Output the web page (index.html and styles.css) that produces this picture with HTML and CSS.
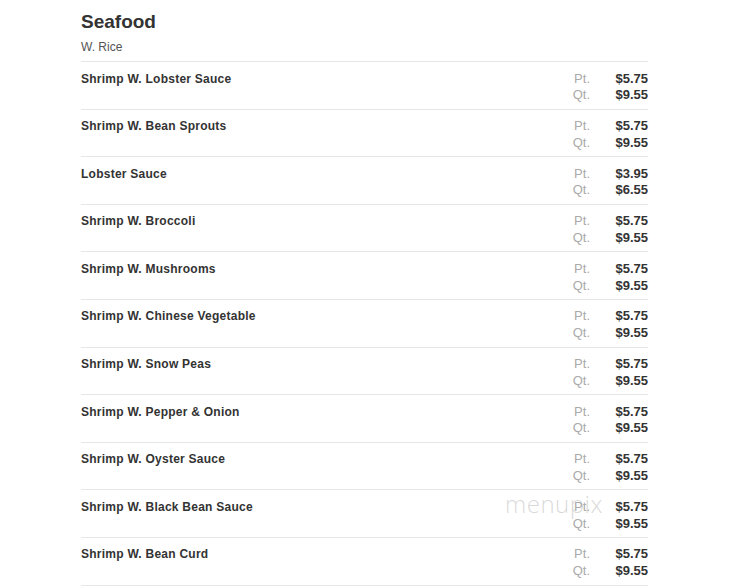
FILE: index.html
```html
<!DOCTYPE html>
<html>
<head>
<meta charset="utf-8">
<link rel="stylesheet" href="styles.css">
</head>
<body>
<div class="menu">
  <div class="header">
    <h1 class="title">Seafood</h1>
    <div class="subtitle">W. Rice</div>
  </div>
  <div class="item"><div class="name">Shrimp W. Lobster Sauce</div><div class="prices"><span class="size">Pt.</span><span class="price">$5.75</span><span class="size">Qt.</span><span class="price">$9.55</span></div></div>
  <div class="item"><div class="name">Shrimp W. Bean Sprouts</div><div class="prices"><span class="size">Pt.</span><span class="price">$5.75</span><span class="size">Qt.</span><span class="price">$9.55</span></div></div>
  <div class="item"><div class="name">Lobster Sauce</div><div class="prices"><span class="size">Pt.</span><span class="price">$3.95</span><span class="size">Qt.</span><span class="price">$6.55</span></div></div>
  <div class="item"><div class="name">Shrimp W. Broccoli</div><div class="prices"><span class="size">Pt.</span><span class="price">$5.75</span><span class="size">Qt.</span><span class="price">$9.55</span></div></div>
  <div class="item"><div class="name">Shrimp W. Mushrooms</div><div class="prices"><span class="size">Pt.</span><span class="price">$5.75</span><span class="size">Qt.</span><span class="price">$9.55</span></div></div>
  <div class="item"><div class="name">Shrimp W. Chinese Vegetable</div><div class="prices"><span class="size">Pt.</span><span class="price">$5.75</span><span class="size">Qt.</span><span class="price">$9.55</span></div></div>
  <div class="item"><div class="name">Shrimp W. Snow Peas</div><div class="prices"><span class="size">Pt.</span><span class="price">$5.75</span><span class="size">Qt.</span><span class="price">$9.55</span></div></div>
  <div class="item"><div class="name">Shrimp W. Pepper &amp; Onion</div><div class="prices"><span class="size">Pt.</span><span class="price">$5.75</span><span class="size">Qt.</span><span class="price">$9.55</span></div></div>
  <div class="item"><div class="name">Shrimp W. Oyster Sauce</div><div class="prices"><span class="size">Pt.</span><span class="price">$5.75</span><span class="size">Qt.</span><span class="price">$9.55</span></div></div>
  <div class="item"><div class="name">Shrimp W. Black Bean Sauce</div><div class="prices"><span class="size">Pt.</span><span class="price">$5.75</span><span class="size">Qt.</span><span class="price">$9.55</span></div></div>
  <div class="item"><div class="name">Shrimp W. Bean Curd</div><div class="prices"><span class="size">Pt.</span><span class="price">$5.75</span><span class="size">Qt.</span><span class="price">$9.55</span></div></div>
  <div class="watermark">menupix</div>
</div>
</body>
</html>
```

FILE: styles.css
```css
html, body {
  margin: 0;
  padding: 0;
  background: #fff;
}
body {
  font-family: "Liberation Sans", Arial, sans-serif;
  color: #333;
}
.menu {
  position: relative;
  width: 567px;
  margin-left: 81px;
}
.header {
  padding-top: 10px;
  height: 62px;
  box-sizing: border-box;
  border-bottom: 1px solid #e6e6e6;
}
.title {
  margin: 0;
  font-size: 19px;
  font-weight: bold;
  line-height: 24px;
  color: #333;
}
.subtitle {
  margin-top: 5px;
  font-size: 12px;
  line-height: 16px;
  color: #555;
}
.item {
  display: flex;
  justify-content: space-between;
  align-items: flex-start;
  padding: 8.5px 0 4.5px;
  height: 47.6px;
  box-sizing: border-box;
  border-bottom: 1px solid #e6e6e6;
}
.name {
  font-size: 12px;
  font-weight: bold;
  line-height: 16.8px;
  letter-spacing: 0.25px;
  color: #333;
}
.prices {
  display: grid;
  grid-template-columns: auto 58px;
  line-height: 16.8px;
}
.size {
  font-size: 13px;
  color: #aaa;
  text-align: right;
}
.price {
  font-size: 13px;
  font-weight: bold;
  text-align: right;
  color: #333;
}
.watermark {
  position: absolute;
  left: 424px;
  top: 487px;
  font-family: "Open Sans", sans-serif;
  font-weight: 300;
  font-size: 24px;
  letter-spacing: 0.5px;
  color: rgba(170, 170, 170, 0.45);
  pointer-events: none;
}
```
